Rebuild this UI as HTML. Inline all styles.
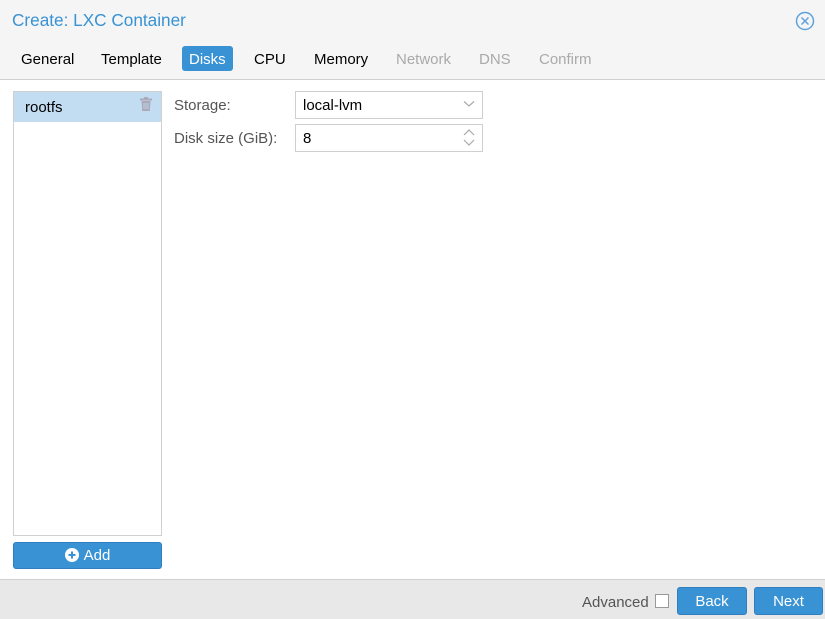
<!DOCTYPE html>
<html><head><style>
*{box-sizing:border-box;margin:0;padding:0}
body{width:825px;height:619px;background:#f5f5f5;font-family:"Liberation Sans",sans-serif;font-size:15px;color:#000;position:relative;overflow:hidden}
.abs{position:absolute}
.title{left:12px;top:10px;font-size:17.2px;color:#3892d4}
.tab{top:46px;height:25px;line-height:27px;font-size:15px;padding:0 7px;border-radius:3px}
.main{left:0;top:79px;width:825px;height:501px;background:#fff;border-top:1px solid #d0d0d0}
.foot{left:0;top:579px;width:825px;height:40px;background:#e8e8e8;border-top:1px solid #d0d0d0}
.btn{background:#3892d4;color:#fff;border:1px solid #2f7fc0;border-radius:3px;text-align:center;font-size:15px}
.field{border:1px solid #cfcfcf;background:#fff;height:28px;line-height:28px;padding-left:7px}
</style></head><body>
<div class="abs title">Create: LXC Container</div>
<svg class="abs" style="left:795px;top:11px" width="20" height="20" viewBox="0 0 20 20"><circle cx="10" cy="10" r="8.5" fill="none" stroke="#5fa2dd" stroke-width="1.5"/><path d="M6.5 6.5L13.5 13.5M13.5 6.5L6.5 13.5" stroke="#5fa2dd" stroke-width="1.5"/></svg>
<div class="abs tab" style="left:14px">General</div>
<div class="abs tab" style="left:94px">Template</div>
<div class="abs tab" style="left:182px;background:#3892d4;color:#fff">Disks</div>
<div class="abs tab" style="left:247px">CPU</div>
<div class="abs tab" style="left:307px">Memory</div>
<div class="abs tab" style="left:389px;color:#aaa">Network</div>
<div class="abs tab" style="left:472px;color:#aaa">DNS</div>
<div class="abs tab" style="left:532px;color:#aaa">Confirm</div>
<div class="abs main"></div>
<div class="abs" style="left:13px;top:91px;width:149px;height:445px;border:1px solid #d0d0d0;background:#fff"></div>
<div class="abs" style="left:14px;top:92px;width:147px;height:30px;background:#c2ddf2;line-height:32px;padding-left:11px">rootfs</div>
<svg class="abs" style="left:140px;top:97px" width="12" height="14" viewBox="0 0 12 14"><rect x="0" y="1.5" width="12" height="2" fill="#aab"/><rect x="4" y="0" width="4" height="2" fill="#aab"/><path d="M1.5 4h9l-.7 10h-7.6z" fill="#aab"/><path d="M4 6v6M6 6v6M8 6v6" stroke="#c2ddf2" stroke-width="0.8"/></svg>
<div class="abs btn" style="left:13px;top:542px;width:149px;height:27px;line-height:26px"><svg width="14" height="14" viewBox="0 0 14 14" style="vertical-align:-2px;margin-right:5px"><circle cx="7" cy="7" r="7" fill="#fff"/><path d="M7 3.5v7M3.5 7h7" stroke="#3892d4" stroke-width="2"/></svg>Add</div>
<div class="abs" style="left:174px;top:97px;color:#555">Storage:</div>
<div class="abs" style="left:174px;top:130px;color:#555">Disk size (GiB):</div>
<div class="abs field" style="left:295px;top:91px;width:188px">local-lvm</div>
<svg class="abs" style="left:463px;top:100px" width="12" height="8"><path d="M1 1.5l5 4.5 5-4.5" fill="none" stroke="#aaa" stroke-width="1.2"/></svg>
<div class="abs field" style="left:295px;top:124px;width:188px">8</div>
<svg class="abs" style="left:463px;top:128px" width="12" height="20"><path d="M1 7l5-5 5 5M1 12l5 5 5-5" fill="none" stroke="#aaa" stroke-width="1.2"/></svg>
<div class="abs foot"></div>
<div class="abs" style="left:582px;top:594px;color:#555">Advanced</div>
<div class="abs" style="left:655px;top:594px;width:14px;height:14px;border:1px solid #999;background:#fff"></div>
<div class="abs btn" style="left:677px;top:587px;width:70px;height:28px;line-height:28px">Back</div>
<div class="abs btn" style="left:754px;top:587px;width:69px;height:28px;line-height:28px">Next</div>
</body></html>
